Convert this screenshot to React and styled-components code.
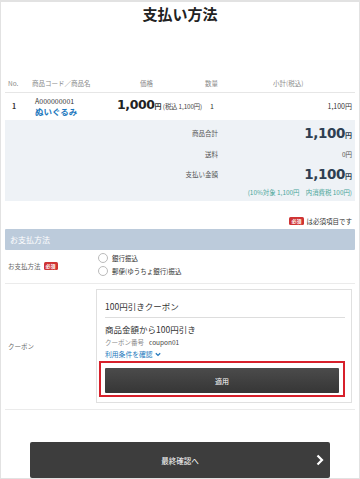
import React from "react";
import styled, { createGlobalStyle } from "styled-components";

const Global = createGlobalStyle`
  html, body { margin: 0; padding: 0; background: #fff; }
  body { font-family: "Noto Sans CJK JP", "Noto Sans", sans-serif; color: #333; }
  * { box-sizing: border-box; }
`;

const Page = styled.div`
  width: 360px;
  height: 479px;
  border: 1px solid #e2e2e2;
  border-top-width: 2px;
  overflow: hidden;
  padding: 0 4px;
  display: flex;
  flex-direction: column;
`;

const Title = styled.h1`
  margin: 0;
  padding-top: 2px;
  height: 72px;
  text-align: center;
  font-size: 15px;
  font-weight: 700;
  line-height: 20px;
  color: #222;
`;

const Row = styled.div`
  display: grid;
  grid-template-columns: 27px 80px 88px 40px 1fr;
  align-items: center;
  border-bottom: ${(p) => (p.$line ? "1px solid #e6e6e6" : "none")};
  height: ${(p) => p.$h}px;
`;

const HeadCell = styled.div`
  font-size: 6.5px;
  color: #8a8a8a;
  padding-left: ${(p) => p.$pl || 0}px;
  white-space: nowrap;
`;

const Cell = styled.div`
  font-size: 7px;
  color: #333;
  padding-left: ${(p) => p.$pl || 0}px;
  padding-right: ${(p) => p.$pr || 0}px;
  text-align: ${(p) => p.$align || "left"};
  font-weight: ${(p) => (p.$bold ? 700 : 400)};
  white-space: nowrap;
  line-height: 10px;
`;

const ItemName = styled.div`
  color: #1c78bd;
  font-weight: 700;
  font-size: 8.5px;
  line-height: 11px;
`;

const BigNum = styled.span`
  font-family: "DejaVu Sans", sans-serif;
  font-size: ${(p) => p.$size || 13.5}px;
  font-weight: 700;
  color: ${(p) => p.$color || "#222"};
  letter-spacing: -0.4px;
`;

const Yen = styled.span`
  font-size: 7px;
  font-weight: ${(p) => (p.$bold ? 700 : 400)};
  color: ${(p) => p.$color || "#333"};
`;

const Small = styled.span`
  font-size: 6.3px;
  color: #444;
  letter-spacing: -0.1px;
`;

const Summary = styled.div`
  background: #eef2f6;
  padding: 3px 0 0;
  height: 81px;
  margin-top: 1px;
`;

const SumRow = styled.div`
  display: grid;
  grid-template-columns: 213px 1fr;
  align-items: center;
  height: 20.5px;
`;

const SumLabel = styled.div`
  text-align: right;
  font-size: 6.5px;
  color: #555;
`;

const SumValue = styled.div`
  text-align: right;
  padding-right: 3px;
  font-size: 6.5px;
  color: #555;
`;

const TaxNote = styled.div`
  text-align: right;
  padding-right: 3px;
  font-size: 6.4px;
  color: #4aa69a;
  height: 18px;
  line-height: 18px;
`;

const Required = styled.div`
  display: flex;
  justify-content: flex-end;
  align-items: center;
  gap: 3px;
  height: 28px;
  padding-top: 13px;
  padding-right: 3px;
  font-size: 6.5px;
  color: #333;
`;

const Badge = styled.span`
  display: inline-block;
  background: #cf3434;
  color: #fff;
  font-size: 5px;
  font-weight: 700;
  line-height: 8px;
  padding: 0 2px;
  border-radius: 1.5px;
`;

const SectionHead = styled.div`
  background: #bccbdb;
  color: #fff;
  font-size: 8px;
  height: 21px;
  line-height: 21px;
  padding-left: 5px;
  border-radius: 1px;
`;

const FormRow = styled.div`
  display: grid;
  grid-template-columns: 91px 1fr;
  align-items: center;
  min-height: ${(p) => p.$h}px;
  border-bottom: 1px solid #ebebeb;
  padding: ${(p) => p.$pad || "0"};
`;

const FormLabel = styled.div`
  font-size: 6.5px;
  color: #666;
  padding-left: 3px;
  display: flex;
  align-items: center;
  gap: 3px;
`;

const Radios = styled.div`
  display: flex;
  flex-direction: column;
  gap: 3px;
  padding-left: 2px;
  margin-top: -3px;
`;

const RadioLine = styled.label`
  display: flex;
  align-items: center;
  gap: 4px;
  font-size: 6.5px;
  color: #333;
  height: 10px;
`;

const Circle = styled.span`
  width: 10px;
  height: 10px;
  border-radius: 50%;
  border: 1px solid #bbb;
  background: #fff;
`;

const Card = styled.div`
  border: 1px solid #e0e0e0;
  padding: 10px 6px 5px 2px;
  margin-right: 3px;
`;

const CardTitle = styled.div`
  font-size: 8.5px;
  color: #333;
  padding-bottom: 5px;
  border-bottom: 1px solid #ddd;
  margin-left: 6px;
  line-height: 12px;
`;

const CardBody = styled.div`
  padding-left: 6px;
  padding-top: 5px;
`;

const CouponDesc = styled.div`
  font-size: 8.5px;
  color: #333;
  line-height: 13px;
`;

const CouponNo = styled.div`
  font-size: 6.5px;
  color: #888;
  line-height: 13px;
  span { color: #444; margin-left: 5px; }
`;

const TermsLink = styled.a`
  font-size: 6.8px;
  color: #2479bd;
  display: flex;
  align-items: center;
  gap: 2px;
  line-height: 11px;
  text-decoration: none;
`;

const ApplyFrame = styled.div`
  border: 2px solid #d7202b;
  padding: 2px 4px;
  margin-top: 1px;
`;

const ApplyButton = styled.button`
  width: 100%;
  height: 25px;
  border: none;
  border-radius: 1px;
  background: linear-gradient(#4b4b4b, #363636);
  color: #fff;
  font-family: inherit;
  font-size: 7px;
`;

const Footer = styled.div`
  display: flex;
  justify-content: center;
  padding-top: 32px;
`;

const NextButton = styled.button`
  position: relative;
  width: 300px;
  height: 36px;
  border: none;
  border-radius: 2px;
  background: #3d3d3d;
  color: #fff;
  font-family: inherit;
  font-size: 7.5px;
  display: flex;
  align-items: center;
  justify-content: center;
`;

const Chevron = styled.svg`
  position: absolute;
  right: 6px;
  top: 12px;
`;

export default function App() {
  return (
    <>
      <Global />
      <Page>
        <Title>支払い方法</Title>

        <Row $h={21} $line>
          <HeadCell $pl={3}>No.</HeadCell>
          <HeadCell>商品コード／商品名</HeadCell>
          <HeadCell $pl={28}>価格</HeadCell>
          <HeadCell $pl={5}>数量</HeadCell>
          <HeadCell $pl={33}>小計(税込)</HeadCell>
        </Row>
        <Row $h={26}>
          <Cell $pl={7} $bold>1</Cell>
          <Cell $pl={3}>
            A000000001
            <ItemName>ぬいぐるみ</ItemName>
          </Cell>
          <Cell $pl={5}>
            <BigNum $size={12.5}>1,000</BigNum>
            <Yen $bold>円</Yen>
            <Small> (税込 1,100円)</Small>
          </Cell>
          <Cell $pl={10}>1</Cell>
          <Cell $align="right" $pr={3}>1,100円</Cell>
        </Row>

        <Summary>
          <SumRow>
            <SumLabel>商品合計</SumLabel>
            <SumValue>
              <BigNum $color="#2f3f52">1,100</BigNum>
              <Yen $bold $color="#2f3f52">円</Yen>
            </SumValue>
          </SumRow>
          <SumRow>
            <SumLabel>送料</SumLabel>
            <SumValue>0円</SumValue>
          </SumRow>
          <SumRow>
            <SumLabel>支払い金額</SumLabel>
            <SumValue>
              <BigNum $color="#2f3f52">1,100</BigNum>
              <Yen $bold $color="#2f3f52">円</Yen>
            </SumValue>
          </SumRow>
          <TaxNote>(10%対象 1,100円　内消費税 100円)</TaxNote>
        </Summary>

        <Required>
          <Badge>必須</Badge>
          <span>は必須項目です</span>
        </Required>

        <SectionHead>お支払方法</SectionHead>

        <FormRow $h={34}>
          <FormLabel>
            お支払方法 <Badge>必須</Badge>
          </FormLabel>
          <Radios>
            <RadioLine>
              <Circle />
              銀行振込
            </RadioLine>
            <RadioLine>
              <Circle />
              郵便(ゆうちょ銀行)振込
            </RadioLine>
          </Radios>
        </FormRow>

        <FormRow $h={124} $pad="5px 0 8px">
          <FormLabel>クーポン</FormLabel>
          <Card>
            <CardTitle>100円引きクーポン</CardTitle>
            <CardBody>
              <CouponDesc>商品金額から100円引き</CouponDesc>
              <CouponNo>
                クーポン番号<span>coupon01</span>
              </CouponNo>
              <TermsLink href="#">
                利用条件を確認
                <svg width="6" height="5" viewBox="0 0 6 5">
                  <path d="M0.8 1.2 L3 3.4 L5.2 1.2" fill="none" stroke="#2479bd" strokeWidth="1.3" />
                </svg>
              </TermsLink>
            </CardBody>
            <ApplyFrame>
              <ApplyButton>適用</ApplyButton>
            </ApplyFrame>
          </Card>
        </FormRow>

        <Footer>
          <NextButton>
            最終確認へ
            <Chevron width="8" height="12" viewBox="0 0 8 12">
              <path d="M1.5 1.5 L6 6 L1.5 10.5" fill="none" stroke="#fff" strokeWidth="2.2" />
            </Chevron>
          </NextButton>
        </Footer>
      </Page>
    </>
  );
}
